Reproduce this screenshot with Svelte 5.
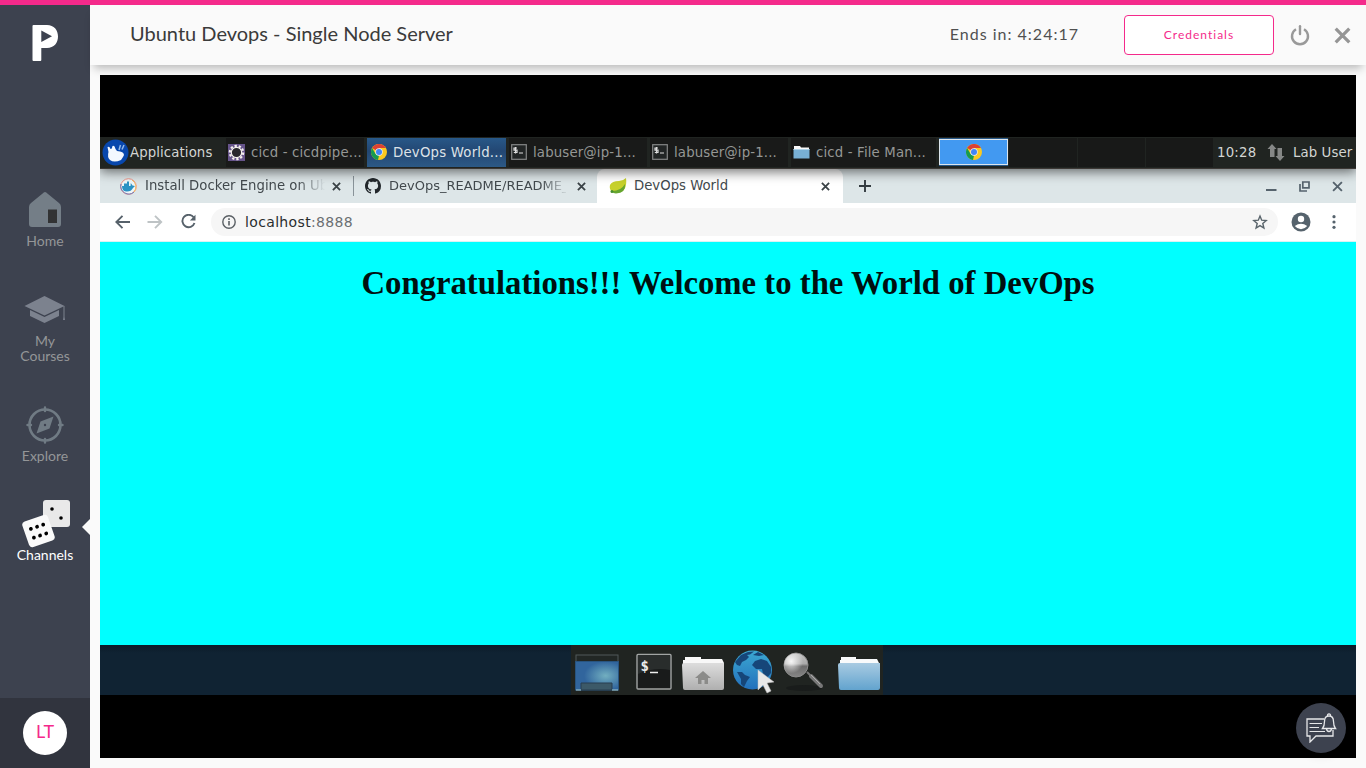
<script>
  const tasks = [
    { icon: 'gear', label: 'cicd - cicdpipe...', w: 141 },
    { icon: 'chrome', label: 'DevOps World...', w: 142, active: true },
    { icon: 'term', label: 'labuser@ip-1...', w: 141 },
    { icon: 'term', label: 'labuser@ip-1...', w: 141 },
    { icon: 'folder', label: 'cicd - File Man...', w: 148 }
  ];
</script>

{#snippet chrome(size)}
  <svg width={size} height={size} viewBox="0 0 16 16">
    <circle cx="8" cy="8" r="8" fill="#fbc91f" />
    <path d="M8 8 1.100 4A8 8 0 0 1 15 4H8Z" fill="#dc4133" />
    <path d="M1.100 4 4.600 10 8 11.600 7 16A8 8 0 0 1 1.100 4Z" fill="#159b51" />
    <circle cx="8" cy="8" r="3.700" fill="#e8effc" />
    <circle cx="8" cy="8" r="3" fill="#4285f4" />
  </svg>
{/snippet}

{#snippet cross(size, width)}
  <svg width={size} height={size} viewBox="0 0 10 10"><path d="M1 1 9 9M9 1 1 9" fill="none" stroke="currentColor" stroke-width={width} /></svg>
{/snippet}

<div class="app">
  <div class="topline"></div>
  <div class="body">
    <nav class="side">
      <svg class="logo" width="27" height="38" viewBox="0 0 27 38">
        <path fill="#fff" fill-rule="evenodd" d="M1.500 1H15C22 1 26 6 26 12.500S22 24 15 24H9.300V36Q9.300 37 8.300 37H1.500Q.5 37 .5 36V2Q.5 1 1.500 1ZM9.300 6.500V18L20 12.200Z" />
      </svg>
      <div class="item home">
        <svg width="34" height="37" viewBox="0 0 34 37">
          <path d="M17 1Q18 1 20 3L31 12Q33 13.500 33 16V33Q33 36 30 36H4Q1 36 1 33V16Q1 13.500 3 12L14 3Q16 1 17 1Z" fill="#747e87" />
          <rect x="20" y="18.500" width="9" height="13.500" fill="#323334" />
        </svg>
        <span>Home</span>
      </div>
      <div class="item courses">
        <svg width="42" height="29" viewBox="0 0 42 29" fill="#7c828e">
          <path d="M20.500 0 40.500 10 20.500 19.500.5 10Z" /><path d="M6 14 20.500 21 35 14V20L20.500 27 6 20Z" />
          <path d="M39.500 10H40.500V21L41 24H39L39.500 21Z" />
        </svg>
        <span>My<br />Courses</span>
      </div>
      <div class="item explore">
        <svg width="38" height="38" viewBox="0 0 38 38">
          <g fill="none" stroke="#707b84"><circle cx="19" cy="19" r="15.500" stroke-width="2.600" /><path stroke-width="2.400" stroke-linecap="round" d="M19 1.500V5M19 33V36.500M1.500 19H5M33 19H36.500" /></g>
          <path fill="#707b84" fill-rule="evenodd" d="M27.500 10.500 23.500 22.500 10.500 27.500 14.500 15.500ZM20.200 19A1.200 1.200 0 1 0 17.800 19 1.200 1.200 0 1 0 20.200 19" />
        </svg>
        <span>Explore</span>
      </div>
      <div class="item channels">
        <svg class="dice" width="49" height="49" viewBox="0 0 49 49">
          <rect x="21" y="1" width="27" height="27" rx="3" fill="#e9e9e9" />
          <circle cx="30" cy="10" r="1.800" /><circle cx="39" cy="19" r="1.800" />
          <g transform="rotate(-19 16.500 32)"><rect x="3" y="18.500" width="27" height="27" rx="3.500" fill="#fafafa" />
            <circle cx="10" cy="27.500" r="1.900" /><circle cx="16.500" cy="27.500" r="1.900" /><circle cx="23" cy="27.500" r="1.900" />
            <circle cx="10" cy="36.800" r="1.900" /><circle cx="16.500" cy="36.800" r="1.900" /><circle cx="23" cy="36.800" r="1.900" /></g>
        </svg>
        <span>Channels</span>
        <i class="pointer"></i>
      </div>
      <div class="user"><div class="avatar">LT</div></div>
    </nav>

    <main>
      <header>
        <h1>Ubuntu Devops - Single Node Server</h1>
        <span class="timer">Ends in: 4:24:17</span>
        <button class="cred">Credentials</button>
        <svg class="power" width="20" height="21" viewBox="0 0 20 21" fill="none" stroke="#999" stroke-width="2.400"><path d="M6 4.300A8 8 0 1 0 14 4.300" /><path d="M10 1.200V9" stroke-linecap="round" /></svg>
        <span class="close">{@render cross(17, 1.9)}</span>
      </header>

      <section class="desktop">
        <div class="panel">
          <div class="apps">
            <svg width="27" height="27" viewBox="0 0 27 27"><circle cx="13.500" cy="13.500" r="13" fill="#0847ad" /><path fill="#f3f8ff" d="M5.500 8Q7.500 7 8.500 10L9.800 9.500 10.500 7Q12.500 5.500 13.500 10L15 12Q22 12.500 22 16L21 18 19 21Q12 24 8 21 5 18 6.500 13Z" /><path d="M17 11 18.500 6M20 10.500 22 6" stroke="#91b8e9" stroke-width="1.500" /></svg>
            <span>Applications</span>
          </div>
          {#each tasks as t}
            <div class="task" class:active={t.active} style="width:{t.w}px">
              <span class="ticon">
                {#if t.icon === 'chrome'}{@render chrome(16)}
                {:else if t.icon === 'gear'}
                  <svg width="17" height="17" viewBox="0 0 17 17"><rect width="17" height="17" fill="#66548a" /><circle cx="8.500" cy="8.500" r="6.700" fill="none" stroke="#f4f0ee" stroke-width="2.200" stroke-dasharray="2.300 1.900" /><circle cx="8.500" cy="8.500" r="5.200" fill="#29282d" stroke="#f4f0ee" stroke-width="1.200" /></svg>
                {:else if t.icon === 'term'}
                  <svg width="16" height="16" viewBox="0 0 16 16"><rect x=".7" y=".7" width="14.600" height="14.600" fill="#222525" stroke="#858787" stroke-width="1.200" /><path d="M6 4H3V6.200H6V8.500H2.800M4.500 3V9.500M8 9H12" fill="none" stroke="#ddd" stroke-width="1.200" /></svg>
                {:else}
                  <svg width="17" height="14" viewBox="0 0 17 14"><path d="M1 4V1H7L8 2.500H16V5H1Z" fill="#fafafa" /><rect x=".5" y="4" width="16" height="9.500" fill="#78b0d5" /><path d="M.5 4.500H16.500" stroke="#b0d5ea" /></svg>
                {/if}
              </span>
              <span class="tlabel">{t.label}</span>
            </div>
          {/each}
          <div class="pager">
            <div class="ws on">{@render chrome(16)}</div><div class="ws"></div><div class="ws"></div><div class="ws"></div>
          </div>
          <span class="clock">10:28</span>
          <svg class="net" width="18" height="18" viewBox="0 0 18 18" fill="#858786"><path d="M5 1 9.500 6H7.500V14H3V6H.5ZM10.500 5H15V13H17.500L13 18 8.500 13H10.500Z" /></svg>
          <span class="lab">Lab User</span>
        </div>

        <div class="tabs">
          <div class="tab t1">
            <svg width="17" height="17" viewBox="0 0 17 17"><circle cx="8.500" cy="8.500" r="7.800" fill="#eef6f8" stroke="#f19588" /><path d="M1 6A8 8 0 0 0 14 14" fill="none" stroke="#6d79b7" /><path d="M12 2A8 8 0 0 1 14 14" fill="none" stroke="#f4bd62" /><path d="M2 8H10.500L10.800 5 12.500 7.500 15 8 13 10Q11 14 6 13.500 2 13 2 8ZM4 5.500H9V8H4ZM7 3.500H9V5.500H7Z" fill="#2b92c4" /></svg>
            <span class="title fade">Install Docker Engine on Ub</span>
            <span class="x">{@render cross(9, 2)}</span>
          </div>
          <div class="tab t2">
            <svg width="16" height="16" viewBox="0 0 16 16" fill="#22272b"><path d="M8 0C3.580 0 0 3.580 0 8c0 3.540 2.290 6.530 5.470 7.590.4.070.55-.17.55-.38 0-.19-.01-.82-.01-1.490-2.010.37-2.530-.49-2.690-.94-.09-.23-.48-.94-.82-1.130-.28-.15-.68-.52-.01-.53.63-.01 1.080.58 1.230.82.72 1.210 1.870.87 2.330.66.07-.52.28-.87.51-1.070-1.780-.2-3.640-.89-3.640-3.950 0-.87.31-1.590.82-2.150-.08-.2-.36-1.020.08-2.120 0 0 .67-.21 2.200.82.64-.18 1.320-.27 2-.27s1.360.09 2 .27c1.530-1.040 2.200-.82 2.200-.82.44 1.100.16 1.920.08 2.120.51.56.82 1.270.82 2.150 0 3.070-1.870 3.750-3.650 3.950.29.25.54.73.54 1.480 0 1.070-.01 1.930-.01 2.200 0 .21.15.46.55.38A8.010 8.010 0 0 0 16 8c0-4.420-3.580-8-8-8Z" /></svg>
            <span class="title fade">DevOps_README/README_</span>
            <span class="x">{@render cross(9, 2)}</span>
          </div>
          <div class="tab t3">
            <svg width="18" height="16" viewBox="0 0 18 16"><path d="M17 0Q18 7 15.500 11 12 16 3 14 0 11 1 7 3 3 10 3 14 3 17 0Z" fill="#c7d12c" /><path d="M3 13Q12 13 16 6 17 15 7 15.500Q4 15.500 3 13Z" fill="#65a52f" /><circle cx="3" cy="13.500" r="1.500" fill="#478d2d" /></svg>
            <span class="title">DevOps World</span>
            <span class="x">{@render cross(9, 2)}</span>
          </div>
          <svg class="plus" width="12" height="12" viewBox="0 0 12 12"><path d="M6 0V12M0 6H12" stroke="#333b40" stroke-width="1.900" /></svg>
          <div class="winctl">
            <svg width="11" height="12" viewBox="0 0 11 12"><path d="M0 10H10.500" stroke="#56636d" stroke-width="2" /></svg>
            <svg width="11" height="11" viewBox="0 0 11 11"><path d="M3.800 1H10V6.800H3.800ZM1 3V10H8" fill="none" stroke="#56636d" stroke-width="1.700" /></svg>
            {@render cross(11, 1.7)}
          </div>
        </div>

        <div class="toolbar">
          <svg width="16" height="14" viewBox="0 0 16 14" fill="none" stroke="#56616a" stroke-width="1.900"><path d="M7.500.8 1.300 7 7.500 13.200M1.300 7H15" /></svg>
          <svg class="fwd" width="16" height="14" viewBox="0 0 16 14" fill="none" stroke="#bec3c5" stroke-width="1.900"><path d="M8 .8 14.200 7 8 13.200M14.200 7H.5" /></svg>
          <svg class="reload" width="15" height="15" viewBox="0 0 15 15"><path d="M12.600 3.300A6.200 6.200 0 1 0 13.500 9" fill="none" stroke="#56616a" stroke-width="1.900" /><path d="M14.500.8V6.500H8.900Z" fill="#56616a" /></svg>
          <div class="url">
            <svg width="14" height="14" viewBox="0 0 14 14"><circle cx="7" cy="7" r="6.200" fill="none" stroke="#5a6065" stroke-width="1.400" /><path d="M7 6V10.500M7 3.300V4.900" stroke="#5a6065" stroke-width="1.600" /></svg>
            <span>localhost<em>:8888</em></span>
            <svg class="star" width="16" height="16" viewBox="0 0 16 16"><path d="M8 2 9.700 6.200 14.200 6.500 10.800 9.500 11.900 14 8 11.600 4.100 14 5.200 9.500 1.800 6.500 6.300 6.200Z" fill="none" stroke="#59646b" stroke-width="1.400" /></svg>
          </div>
          <svg class="prof" width="20" height="20" viewBox="0 0 20 20"><circle cx="10" cy="10" r="9.500" fill="#56636d" /><circle cx="10" cy="7" r="3.200" fill="#fff" /><path d="M3.800 14Q10 9.500 16.200 14 13.500 17.200 10 17.200T3.800 14Z" fill="#fff" /></svg>
          <svg width="4" height="14" viewBox="0 0 4 14" fill="#56636d"><circle cx="2" cy="1.700" r="1.600" /><circle cx="2" cy="7" r="1.600" /><circle cx="2" cy="12.300" r="1.600" /></svg>
        </div>

        <div class="page"><h2>Congratulations!!! Welcome to the World of DevOps</h2></div>

        <div class="strip">
          <div class="dock">
            <svg width="312" height="50" viewBox="0 0 312 50">
              <defs>
                <radialGradient id="desk" cx=".7" cy=".5"><stop stop-color="#72afc0" /><stop offset="1" stop-color="#31659d" /></radialGradient>
                <linearGradient id="grey" x2="0" y2="1"><stop stop-color="#ddd" /><stop offset="1" stop-color="#afafaf" /></linearGradient>
                <linearGradient id="blue" x2="0" y2="1"><stop stop-color="#a8cbe2" /><stop offset="1" stop-color="#62a3ce" /></linearGradient>
                <linearGradient id="ball" x2="0" y2="1"><stop stop-color="#c4c4c4" /><stop offset=".45" stop-color="#aaa" /><stop offset=".55" stop-color="#6c6c6c" /><stop offset="1" stop-color="#858585" /></linearGradient>
                <radialGradient id="shine" cx=".3" cy=".35" r=".5"><stop stop-color="#fff" stop-opacity=".9" /><stop offset="1" stop-color="#fff" stop-opacity="0" /></radialGradient>
                <linearGradient id="earth" x2="0" y2="1"><stop stop-color="#3ba8d1" /><stop offset="1" stop-color="#2370bc" /></linearGradient>
              </defs>
              <rect x="5" y="10" width="42" height="7" fill="#222725" stroke="#50595a" />
              <rect x="4.500" y="16.500" width="43" height="28.500" fill="url(#desk)" stroke="#28547f" />
              <path d="M10 45V38H41V45Z" fill="#3c5968" stroke="#283f50" /><path d="M5 45H10M41 45H47" stroke="#a9d4df" />
              <rect x="66" y="9.500" width="34" height="34.500" rx="1" fill="#191b1b" stroke="#a1a4a3" stroke-width="1.400" />
              <path d="M67 10H99V25Q83 22 67 29Z" fill="#292d2c" />
              <text x="69.500" y="25.500" class="prompt">$</text><path d="M79 27.500H87" stroke="#eee" stroke-width="1.500" />
              <path d="M112 19V15H114V12H130V14H151L153 18V24H112Z" fill="#f8f8f8" /><path d="M111 20Q111 18 113 18H153V43Q153 45 151 45H114Q112 45 112 43Z" fill="url(#grey)" />
              <path d="M132 26 140 33H137V39H133.500V35H130.500V39H127V33H124Z" fill="#8b8b89" />
              <circle cx="181.500" cy="25" r="19.500" fill="url(#earth)" />
              <path d="M164 17 170 10 177 7 183 6.500 179 9.500 176 10 178 12 175 15 171 17 169 21 166 20ZM166 27 171 27 174 30 179 32 176 36 173 42 170 39 170 34ZM182 10 187 7 193 10 188 11ZM184 16 190 14 196 16 200 22 200 28 196 33 192 29 191 24 185 24 181 20Z" fill="#164679" />
              <path d="M187 25V45L192 40 196 48 200 46 196 38 203 37Z" fill="#e8e8e8" stroke="#c1c1c1" stroke-width=".5" />
              <ellipse cx="233" cy="43" rx="18" ry="3" fill="#191c1b" /><path d="M236 27 240 31" stroke="#777" stroke-width="2" /><path d="M240 31 250 41" stroke="#777" stroke-width="4" stroke-linecap="round" /><path d="M240 30 249 39" stroke="#aaa" />
              <circle cx="225" cy="20" r="12" fill="url(#ball)" stroke="#8b8b8b" /><circle cx="225" cy="20" r="12" fill="url(#shine)" />
              <path d="M269 20V15H270V12H285V14H306L308 18V22H269Z" fill="#f8fafb" /><path d="M267 20Q267 18 269 18H309V43Q309 45 307 45H270Q268 45 268 43Z" fill="url(#blue)" />
            </svg>
          </div>
        </div>
      </section>
    </main>
  </div>
  <div class="chat">
    <svg width="32" height="30" viewBox="0 0 32 30" fill="none" stroke="#e6e7e9" stroke-width="1.300">
      <path d="M19 6H2V23H5V29L11 23H28V17" /><path d="M4.500 10.500H17M4.500 14.500H14M4.500 18.500H20" stroke-width="1.200" />
      <path d="M17.500 15.500Q19.500 13 19.500 8.500Q19.500 3 24 3T28.500 8.500Q28.500 13 30.500 15.500ZM22.500 3A1.600 1.600 0 1 1 25.500 3M21.500 16Q22 18.500 24 18.500T26.500 16" />
    </svg>
  </div>
</div>

<style>
  :global(body) { background: #fafafa; overflow: hidden; }
  svg { display: block; flex: none; }
  .app { width: 1366px; height: 768px; display: flex; flex-direction: column; font-family: Lato, sans-serif; position: relative; }
  .topline { height: 5px; background: #f42a8b; flex: none; }
  .body { flex: 1; display: flex; min-height: 0; }
  .side { width: 90px; background: #3d424f; display: flex; flex-direction: column; align-items: center; flex: none; padding-top: 19px; box-sizing: border-box; }
  .item { position: relative; width: 90px; display: flex; flex-direction: column; align-items: center; color: #949698; font-size: 14px; line-height: 15px; text-align: center; }
  .home { margin-top: 129px; height: 105px; }
  .home span { margin-top: 5px; }
  .courses { height: 110px; }
  .courses span { margin-top: 8px; }
  .explore { height: 93px; }
  .explore span { margin-top: 4px; }
  .channels { color: #fff; }
  .dice { margin-left: 2px; margin-bottom: -1px; }
  .pointer { position: absolute; right: 0; top: 20px; border: 8px solid transparent; border-left: 0; border-right-color: #fafafa; }
  .user { margin-top: auto; width: 90px; height: 70px; background: #31343e; display: flex; justify-content: center; align-items: center; }
  .avatar { width: 44px; height: 44px; border-radius: 50%; background: #fff; color: #f42a8b; font-size: 18px; line-height: 41px; text-align: center; }
  main { flex: 1; min-width: 0; display: flex; flex-direction: column; }
  header { height: 60px; flex: none; display: flex; align-items: center; padding: 0 16px 0 40px; box-sizing: border-box; box-shadow: 0 7px 9px -4px rgba(0,0,0,.28); color: #3b3b3b; }
  h1 { margin: 0 auto 4px 0; font-size: 20px; font-weight: 400; line-height: 26px; white-space: nowrap; }
  .timer { font-size: 16px; letter-spacing: 1px; margin: 0 45px 3px 0; color: #505050; }
  .cred { width: 150px; height: 40px; border: 1px solid #f42a8b; border-radius: 4px; background: #fff; color: #f42a8b; font: 12px Lato, sans-serif; letter-spacing: 1px; padding: 0 0 1px; }
  .power { margin: 0 24px 0 16px; }
  .close { color: #959595; width: 16px; display: flex; justify-content: center; }
  .desktop { margin: 10px 10px 0; height: 683px; background: #000; padding: 62px 0 63px; box-sizing: border-box; display: flex; flex-direction: column; font-family: "DejaVu Sans", sans-serif; }
  .panel { height: 32px; flex: none; display: flex; align-items: center; background: #202421; border-bottom: 1px solid #3c3835; box-sizing: border-box; color: #d3d5d3; font-size: 13.300px; box-shadow: 0 3px 12px rgba(0,0,0,.55); clip-path: inset(0 0 -18px 0); position: relative; z-index: 1; white-space: nowrap; padding-bottom: 1px; }
  .apps { width: 126px; display: flex; align-items: center; gap: 1px; padding-left: 2px; box-sizing: border-box; flex: none; letter-spacing: .1px; }
  .task { height: 29px; display: flex; align-items: center; gap: 6px; box-sizing: border-box; flex: none; color: #959795; background: #191a19; border-right: 3px solid #202421; padding-left: 2px; }
  .task.active { background: linear-gradient(#285888, #234773 45%, #2c5986) padding-box; color: #dce2e8; padding-left: 4px; }
  .tlabel { letter-spacing: .15px; }
  .task.active .tlabel { letter-spacing: .2px; }
  .pager { display: flex; gap: 1px; width: 274px; flex: none; }
  .ws { flex: 1; height: 29px; box-sizing: border-box; background: #181918; min-width: 0; }
  .on { background: #4299f1; border: 1px solid #dce5ed; box-shadow: 0 -1px #285888, 0 1px #285888; height: 26px; align-self: center; display: flex; align-items: center; justify-content: center; }
  .clock { margin-left: 4px; width: 50px; flex: none; letter-spacing: .2px; }
  .net { margin-right: 8px; }
  .lab { letter-spacing: .1px; }
  .tabs { height: 34px; flex: none; background: #dde6e8; display: flex; align-items: center; color: #42494d; font-size: 13.250px; }
  .tab { display: flex; align-items: center; height: 34px; box-sizing: border-box; flex: none; white-space: nowrap; }
  .t1 { width: 254px; padding-left: 20px; background: linear-gradient(#899399, #899399) right 7px / 1px 20px no-repeat; }
  .t2 { width: 243px; padding-left: 11px; }
  .t3 { width: 246px; padding-left: 12px; background: #fff; border-radius: 8px 8px 0 0; }
  .title { width: 180px; margin-left: 8px; overflow: hidden; line-height: 20px; }
  .t2 .title { width: 177px; font-size: 13px; }
  .t3 .title { width: 179px; margin-left: 7px; }
  .fade { mask-image: linear-gradient(90deg, #000 152px, transparent 180px); }
  .x { margin-left: 7px; color: #3a4246; }
  .t2 .x { margin-left: 11px; }
  .t3 .x { margin-left: 8px; }
  .plus { margin-left: 16px; }
  .winctl { margin-left: auto; padding-right: 13px; display: flex; align-items: center; gap: 22px; color: #56636d; }
  .toolbar { height: 39px; flex: none; box-sizing: border-box; background: #fff; display: flex; align-items: center; padding: 0 20px 1px 15px; border-bottom: 1px solid #d8f3f3; }
  .fwd { margin-left: 16px; }
  .reload { margin-left: 18px; }
  .url { width: 1068px; height: 28px; margin: 0 13px 0 15px; border-radius: 14px; background: #f6f6f6; display: flex; align-items: center; box-sizing: border-box; padding: 0 10px 0 11px; font-size: 14px; letter-spacing: .35px; color: #292c2e; }
  .url span { margin-left: 9px; }
  em { font-style: normal; color: #6b6f72; }
  .star { margin-left: auto; }
  .prof { margin-right: 21px; }
  .page { flex: 1; background: #0ff; min-height: 0; }
  h2 { margin: 21px 0 0; text-align: center; font: bold 32.720px/40px "Liberation Serif", serif; white-space: nowrap; color: #001010; }
  .strip { height: 50px; flex: none; background: linear-gradient(#0c1b28, #102333 8px); display: flex; justify-content: center; }
  .dock { width: 312px; height: 50px; margin-right: 2px; background: #202421; }
  .prompt { font: bold 14px "DejaVu Sans Mono", monospace; fill: #eee; }
  .chat { position: absolute; left: 1296px; top: 703px; width: 50px; height: 50px; border-radius: 50%; background: #3d424f; display: flex; align-items: center; justify-content: center; box-shadow: 0 3px 10px rgba(0,0,0,.1); }
</style>
